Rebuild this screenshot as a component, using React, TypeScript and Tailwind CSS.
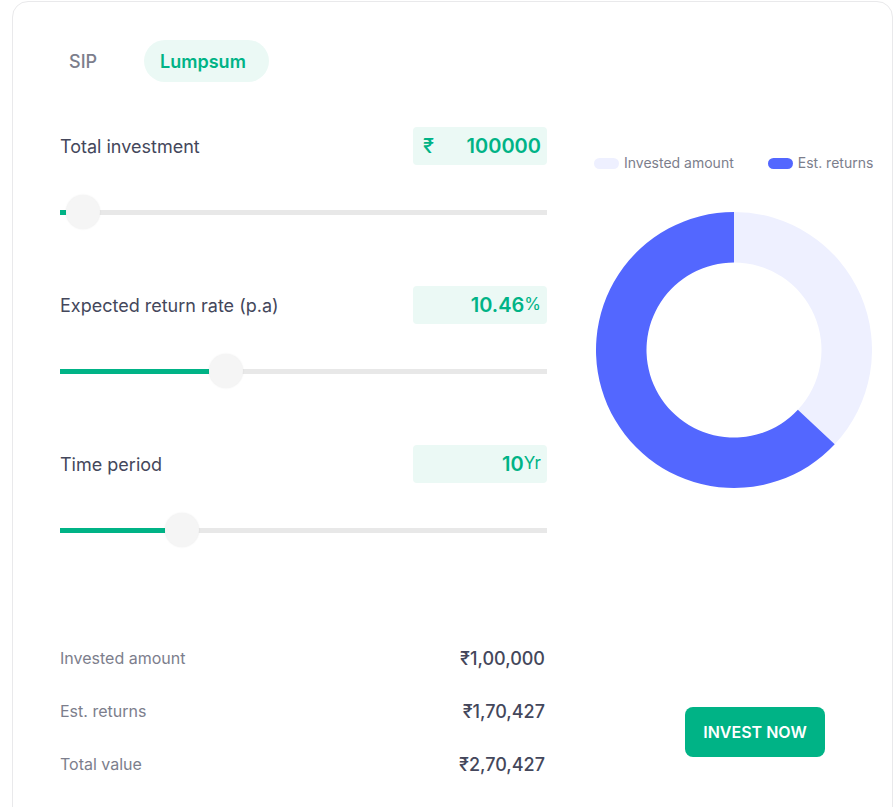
import { useState } from "react";

const polar = (cx: number, cy: number, r: number, deg: number) => {
    const a = ((deg - 90) * Math.PI) / 180;
    return [cx + r * Math.cos(a), cy + r * Math.sin(a)];
};

const arc = (cx: number, cy: number, ro: number, ri: number, start: number, end: number) => {
    const [x1, y1] = polar(cx, cy, ro, start);
    const [x2, y2] = polar(cx, cy, ro, end);
    const [x3, y3] = polar(cx, cy, ri, end);
    const [x4, y4] = polar(cx, cy, ri, start);
    const large = end - start > 180 ? 1 : 0;
    return `M${x1} ${y1} A${ro} ${ro} 0 ${large} 1 ${x2} ${y2} L${x3} ${y3} A${ri} ${ri} 0 ${large} 0 ${x4} ${y4} Z`;
};

function Slider({ pct }: { pct: number }) {
    return (
        <div className="relative h-[36px] flex items-center">
            <div className="w-full h-[5px] bg-[#e8e8e8]">
                <div className="h-full bg-[#00b386]" style={{ width: `${pct}%` }}></div>
            </div>
            <div
                className="absolute top-[1px] w-[34px] h-[34px] rounded-full bg-[#f5f5f5] shadow-[0_0_2px_rgba(0,0,0,0.08)]"
                style={{ left: `${pct}%` }}
            ></div>
        </div>
    );
}

function InputRow({ label, children, pct }: { label: string, children: React.ReactNode, pct: number }) {
    return (
        <div className="flex flex-col">
            <div className="flex flex-row items-center justify-between">
                <span className="text-[18px] text-[#44475b]">{label}</span>
                <div className="w-[134px] h-[38px] rounded bg-[#ebf9f5] flex items-center px-[6px] text-[#00b386]">
                    {children}
                </div>
            </div>
            <div className="mt-[29px]">
                <Slider pct={pct} />
            </div>
        </div>
    );
}

export default function App() {
    const [tab, setTab] = useState<string>("Lumpsum");
    const invested = 100000;
    const returns = 170427;
    const angle = (invested / (invested + returns)) * 360;

    return (
        <div className="bg-white min-h-[807px] pt-px pl-3 pr-[3px] overflow-hidden" style={{ fontFamily: "Inter, 'Noto Sans', sans-serif" }}>
            <div className="border border-[#e9e9eb] rounded-2xl h-[840px] pt-[38px] pl-[47px] pr-[20px]">
                <div className="flex flex-row items-center">
                    {["SIP", "Lumpsum"].map((t) => (
                        <button
                            key={t}
                            onClick={() => setTab(t)}
                            className={
                                tab === t
                                    ? "h-[42px] pl-[16px] pr-[23px] rounded-full bg-[#ebf9f5] text-[#00b386] text-[18px] font-semibold"
                                    : "h-[42px] px-[9px] mr-[38px] rounded-full text-[#7c7e8c] text-[18px] font-medium"
                            }
                        >
                            {t}
                        </button>
                    ))}
                </div>

                <div className="flex flex-row mt-[45px]">
                    <div className="w-[488px] flex flex-col">
                        <div className="flex flex-col gap-[56px]">
                            <InputRow label="Total investment" pct={1.3}>
                                <span className="text-[20px] font-medium ml-[4px]">₹</span>
                                <span className="ml-auto text-[20px] font-semibold">100000</span>
                            </InputRow>
                            <InputRow label="Expected return rate (p.a)" pct={30.5}>
                                <span className="ml-auto text-[20px] font-semibold">10.46</span>
                                <span className="text-[17px]">%</span>
                            </InputRow>
                            <InputRow label="Time period" pct={21.6}>
                                <span className="ml-auto text-[20px] font-semibold">10</span>
                                <span className="text-[17px]">Yr</span>
                            </InputRow>
                        </div>

                        <div className="mt-[97px] flex flex-col gap-[27px] pr-[2px]">
                            {[
                                ["Invested amount", "₹1,00,000"],
                                ["Est. returns", "₹1,70,427"],
                                ["Total value", "₹2,70,427"],
                            ].map(([k, v]) => (
                                <div key={k} className="flex flex-row items-center justify-between h-[26px]">
                                    <span className="text-[16px] text-[#7c7e8c]">{k}</span>
                                    <span className="text-[18px] font-medium text-[#44475b]">{v}</span>
                                </div>
                            ))}
                        </div>
                    </div>

                    <div className="ml-[47px] w-[278px] flex flex-col">
                        <div className="flex flex-row items-center mt-[26px] text-[14px] leading-[20px] text-[#7c7e8c] whitespace-nowrap">
                            <span className="shrink-0 w-[25px] h-[11px] rounded-full bg-[#eef0ff]"></span>
                            <span className="ml-[5px]">Invested amount</span>
                            <span className="shrink-0 ml-[34px] w-[25px] h-[11px] rounded-full bg-[#5367ff]"></span>
                            <span className="ml-[5px]">Est. returns</span>
                        </div>
                        <div className="mt-[39px] ml-[2px]">
                            <svg width="276" height="276" viewBox="0 0 276 276">
                                <path d={arc(138, 138, 138, 87.5, 0, angle)} fill="#eef0ff" />
                                <path d={arc(138, 138, 138, 87.5, angle, 359.999)} fill="#5367ff" />
                            </svg>
                        </div>
                        <button className="mt-[219px] ml-[91px] w-[140px] h-[50px] rounded-lg bg-[#00b386] text-white text-[16px] font-semibold">
                            INVEST NOW
                        </button>
                    </div>
                </div>
            </div>
        </div>
    );
}
